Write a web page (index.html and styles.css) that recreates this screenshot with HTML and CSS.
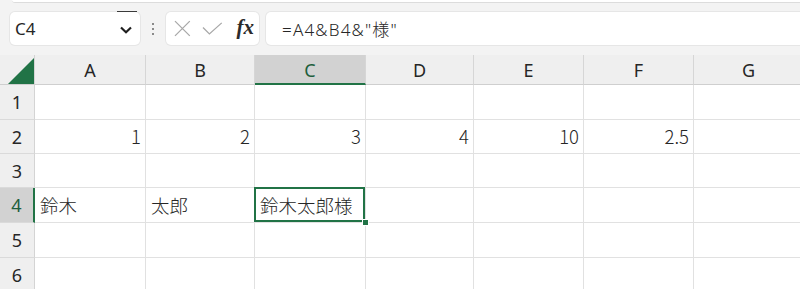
FILE: index.html
```html
<!DOCTYPE html>
<html lang="ja">
<head>
  <meta charset="utf-8">
  <title>Book1 - Excel</title>
  <link rel="stylesheet" href="styles.css">
</head>
<body>
  <div class="ribbon-edge"></div>
  <div class="formula-bar">
    <div class="name-box">
      <span class="name-text">C4</span>
      <svg class="chevron" width="12" height="8" viewBox="0 0 12 8"><polyline points="1,1.5 6,6.2 11,1.5" fill="none" stroke="#1f1f1f" stroke-width="2.2"/></svg>
    </div>
    <div class="grip"><i></i><i></i><i></i></div>
    <div class="fx-box">
      <svg class="fx-icon" width="17" height="17" viewBox="0 0 17 17"><path d="M1 1 L16 16 M16 1 L1 16" stroke="#a8a8a8" stroke-width="1.3" fill="none"/></svg>
      <svg class="fx-icon" width="21" height="13" viewBox="0 0 21 13"><polyline points="1,5.5 7.5,12 20,0.8" stroke="#a8a8a8" stroke-width="1.3" fill="none"/></svg>
      <span class="fx">fx</span>
    </div>
    <div class="formula-input">=A4&amp;B4&amp;"様"</div>
  </div>

  <div class="sheet">
    <div class="corner"><span class="tri"></span></div>
    <div class="col-head">A</div>
    <div class="col-head">B</div>
    <div class="col-head active">C</div>
    <div class="col-head">D</div>
    <div class="col-head">E</div>
    <div class="col-head">F</div>
    <div class="col-head">G</div>

    <div class="row-head">1</div>
    <div class="cell"></div><div class="cell"></div><div class="cell"></div><div class="cell"></div><div class="cell"></div><div class="cell"></div><div class="cell"></div>

    <div class="row-head">2</div>
    <div class="cell num">1</div>
    <div class="cell num">2</div>
    <div class="cell num">3</div>
    <div class="cell num">4</div>
    <div class="cell num">10</div>
    <div class="cell num">2.5</div>
    <div class="cell"></div>

    <div class="row-head">3</div>
    <div class="cell"></div><div class="cell"></div><div class="cell"></div><div class="cell"></div><div class="cell"></div><div class="cell"></div><div class="cell"></div>

    <div class="row-head active">4</div>
    <div class="cell">鈴木</div>
    <div class="cell">太郎</div>
    <div class="cell selected">鈴木太郎様</div>
    <div class="cell"></div><div class="cell"></div><div class="cell"></div><div class="cell"></div>

    <div class="row-head">5</div>
    <div class="cell"></div><div class="cell"></div><div class="cell"></div><div class="cell"></div><div class="cell"></div><div class="cell"></div><div class="cell"></div>

    <div class="row-head">6</div>
    <div class="cell"></div><div class="cell"></div><div class="cell"></div><div class="cell"></div><div class="cell"></div><div class="cell"></div><div class="cell"></div>
  </div>
</body>
</html>
```

FILE: styles.css
```css
html, body {
  margin: 0;
  padding: 0;
  overflow: hidden;
}
body {
  background: #f3f3f3;
  font-family: "Noto Sans", "Noto Sans CJK JP", sans-serif;
  color: #262626;
}

/* top of ribbon */
.ribbon-edge {
  height: 2px;
  margin-left: 12px;
  background: #ffffff;
  border-bottom: 1px solid #dcdcdc;
  border-bottom-left-radius: 4px;
}

/* formula bar */
.formula-bar {
  display: flex;
  align-items: center;
  height: 33px;
  padding: 9px 0 10px 10px;
}
.name-box {
  position: relative;
  display: flex;
  align-items: center;
  justify-content: space-between;
  width: 130px;
  height: 33px;
  box-sizing: border-box;
  padding: 0 8px 0 5px;
  background: #ffffff;
  border-radius: 5px;
  box-shadow: 0 0 0 1px #e6e6e6;
}
.name-box::before {
  content: "";
  position: absolute;
  top: -1px;
  left: 107px;
  width: 20px;
  height: 1px;
  background: #3a3a3a;
}
.name-text {
  font-family: "Noto Sans", sans-serif;
  font-size: 17px;
}
.chevron {
  margin-top: 2px;
}
.grip {
  display: flex;
  flex-direction: column;
  gap: 3px;
  margin: 0 12px 0 12px;
}
.grip i {
  display: block;
  width: 2px;
  height: 2px;
  background: #8a8a8a;
}
.fx-box {
  display: flex;
  align-items: center;
  width: 93px;
  height: 33px;
  box-sizing: border-box;
  padding: 0 5px 0 8px;
  gap: 11px;
  background: #ffffff;
  border-radius: 5px;
  box-shadow: 0 0 0 1px #e6e6e6;
}
.fx {
  font-family: "Liberation Serif", "DejaVu Serif", serif;
  font-style: italic;
  font-weight: bold;
  font-size: 21px;
  color: #2b2b2b;
  margin-left: 3px;
  margin-top: -3px;
}
.formula-input {
  flex: 1;
  height: 33px;
  margin-left: 7px;
  margin-right: -10px;
  padding-left: 16px;
  box-sizing: border-box;
  display: flex;
  align-items: center;
  background: #ffffff;
  border-radius: 5px;
  box-shadow: 0 0 0 1px #e6e6e6;
  font-family: "Noto Sans", "Noto Sans CJK JP", sans-serif;
  font-size: 17px;
  font-weight: 300;
  letter-spacing: 1.2px;
}

/* worksheet */
.sheet {
  display: grid;
  grid-template-columns: 35px 111px 109px 111px 108px 110px 110px 110px;
  grid-template-rows: 30px 35px 34px 34px 35px 35px 34px;
  background: #ffffff;
}
.corner, .col-head, .row-head, .cell {
  box-sizing: border-box;
  display: flex;
  align-items: center;
}
.corner {
  justify-content: flex-end;
  align-items: flex-end;
  background: #efefef;
  border-right: 1px solid #d4d4d4;
  border-bottom: 1px solid #cfcfcf;
}
.tri {
  width: 26px;
  height: 26px;
  background: #217346;
  clip-path: polygon(100% 0, 100% 100%, 0 100%);
}
.col-head {
  justify-content: center;
  background: #efefef;
  border-right: 1px solid #d6d6d6;
  border-bottom: 1px solid #cfcfcf;
  font-size: 18px;
  padding-top: 1px;
}
.col-head.active {
  background: #d2d2d2;
  border-bottom: 2px solid #217346;
  color: #1e5e3c;
}
.row-head {
  justify-content: center;
  background: #efefef;
  border-right: 1px solid #d4d4d4;
  border-bottom: 1px solid #dadada;
  font-size: 18px;
}
.row-head.active {
  background: #d2d2d2;
  border-right: 2px solid #217346;
  color: #1e5e3c;
}
.cell {
  position: relative;
  padding: 0 4px 1px 5px;
  border-right: 1px solid #e1e1e1;
  border-bottom: 1px solid #e1e1e1;
  font-family: "Noto Sans CJK JP", sans-serif;
  font-size: 18.5px;
  font-weight: 300;
  white-space: nowrap;
}
.cell.num {
  justify-content: flex-end;
}
.cell.selected::before {
  content: "";
  position: absolute;
  top: -1px;
  left: -1px;
  right: 0;
  bottom: 0;
  border: 2px solid #217346;
}
.cell.selected::after {
  content: "";
  position: absolute;
  right: -4px;
  bottom: -4px;
  width: 5px;
  height: 5px;
  background: #217346;
  border: 1px solid #ffffff;
  z-index: 2;
}
```
